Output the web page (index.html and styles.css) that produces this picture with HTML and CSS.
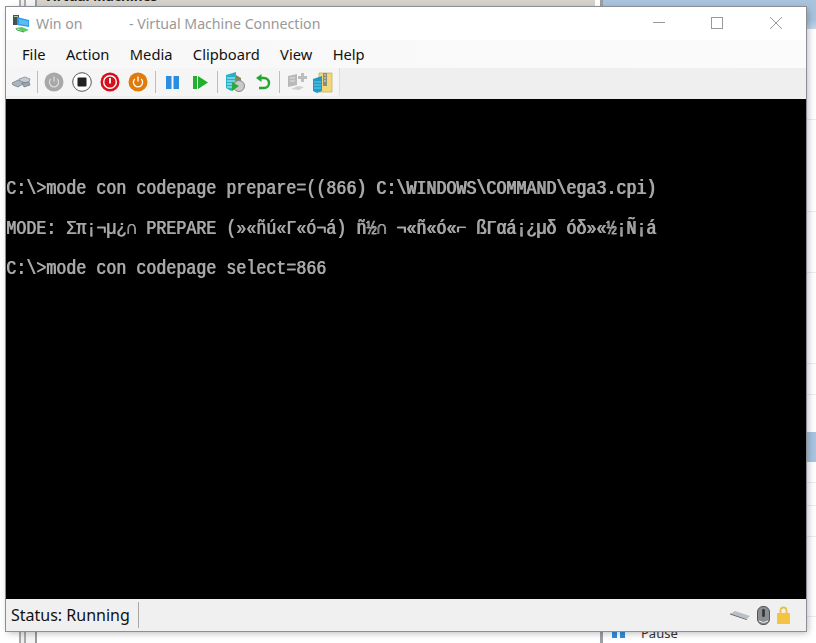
FILE: index.html
```html
<!DOCTYPE html>
<html lang="en">
<head>
<meta charset="utf-8">
<title>Win on - Virtual Machine Connection</title>
<link rel="stylesheet" href="styles.css">
</head>
<body>
<div class="desk">
  <div class="bg-left-top"><span class="bg-heading">Virtual Machines</span></div>
  <div class="bg-rail"></div>
  <div class="bg-divider"></div>
  <div class="bg-blue-top"></div>
  <div class="bg-rows">
    <i class="row r1"></i><i class="row r2"></i><i class="row r3"></i><i class="row r4"></i><i class="row r5"></i>
    <i class="row r6"></i><i class="row r7"></i><i class="row r8"></i><i class="row r9"></i>
  </div>
  <div class="bg-right-select"></div>
  <div class="bg-pause">
    <svg width="13" height="10" viewBox="0 0 13 10"><rect width="5" height="10" fill="#2f8fe0"/><rect x="8" width="5" height="10" fill="#2f8fe0"/></svg>
    <span>Pause</span>
  </div>

  <main class="window">
    <header class="titlebar">
      <svg class="app-icon" width="20" height="20" viewBox="0 0 20 20">
        <rect x="1" y="1" width="6" height="10" fill="#4a4f52"/>
        <rect x="2" y="2" width="4" height="1" fill="#9fd89b"/>
        <path d="M5 3l12 3v7L5 11z" fill="#2c9bea"/>
        <path d="M7 5l9 2v4.500L7 10z" fill="#58bdf5"/>
        <path d="M4 14l6-1 7 3-5 2z" fill="#62c866"/>
        <path d="M4 14l1 2 7 2" stroke="#36a03f" fill="none"/>
      </svg>
      <span class="title"><span class="vm-name">Win on</span><span>- Virtual Machine Connection</span></span>
      <div class="caption">
        <svg width="14" height="14" viewBox="0 0 14 14"><path d="M0 6.500h12" stroke="#999" fill="none"/></svg>
        <svg width="14" height="14" viewBox="0 0 14 14"><rect x=".5" y="1.500" width="11" height="11" stroke="#999" fill="none"/></svg>
        <svg width="14" height="14" viewBox="0 0 14 14"><path d="M1 1l12 12M13 1L1 13" stroke="#999" fill="none"/></svg>
      </div>
    </header>
    <nav class="menubar">
      <span>File</span><span>Action</span><span>Media</span><span>Clipboard</span><span>View</span><span>Help</span>
    </nav>
    <div class="toolbar">
      <div class="tools">
        <svg class="tool" width="20" height="14" viewBox="0 0 20 14">
          <path d="M1 8l6-3 4 1 1 3-5 3-5-2z" fill="#a9b4bd" stroke="#6f7a84" stroke-width=".7"/>
          <path d="M8 4l6-2 5 2-1 3-4 1-5-2z" fill="#c3ccd3" stroke="#77828c" stroke-width=".7"/>
          <path d="M11 8l7-1 1 3-6 2z" fill="#9aa5ae" stroke="#6f7a84" stroke-width=".7"/>
        </svg>
        <i class="sep ml6"></i>
        <svg class="tool ml6" width="20" height="20" viewBox="0 0 20 20">
          <circle cx="10" cy="10" r="9.500" fill="#a8a8a8"/>
          <path d="M6.800 7a4.600 4.600 0 1 0 6.400 0" stroke="#ddd" stroke-width="1.200" fill="none"/>
          <path d="M10 4.500v5" stroke="#ddd" stroke-width="1.200"/>
        </svg>
        <svg class="tool ml8" width="20" height="20" viewBox="0 0 20 20">
          <circle cx="10" cy="10" r="9.300" fill="#fff" stroke="#555" stroke-width="1"/>
          <rect x="5.500" y="5.500" width="9" height="9" rx="1" fill="#222"/>
        </svg>
        <svg class="tool ml8" width="20" height="20" viewBox="0 0 20 20">
          <circle cx="10" cy="10" r="9.500" fill="#d50f1c"/>
          <circle cx="10" cy="10" r="6.300" fill="none" stroke="#fff" stroke-width="1.400"/>
          <path d="M10 6v5.500" stroke="#fff" stroke-width="1.800"/>
        </svg>
        <svg class="tool ml8" width="20" height="20" viewBox="0 0 20 20">
          <circle cx="10" cy="10" r="9.500" fill="#e07b0c"/>
          <path d="M6.800 7a4.600 4.600 0 1 0 6.400 0" stroke="#fff" stroke-width="1.300" fill="none"/>
          <path d="M10 4.500v5" stroke="#fff" stroke-width="1.300"/>
        </svg>
        <i class="sep ml7"></i>
        <svg class="tool ml10" width="13" height="13" viewBox="0 0 13 13">
          <rect width="5.500" height="13" fill="#2b8de0"/><rect x="7.500" width="5.500" height="13" fill="#2b8de0"/>
        </svg>
        <svg class="tool ml14" width="15" height="13" viewBox="0 0 15 13">
          <rect width="4" height="13" fill="#23b02f"/><path d="M5 0l10 6.500L5 13z" fill="#23b02f"/>
        </svg>
        <i class="sep ml9"></i>
        <svg class="tool ml7" width="20" height="20" viewBox="0 0 20 20">
          <path d="M1 3l10-3v16l-5 3-5-3z" fill="#27b1cb"/>
          <path d="M2 6h8M2 9h8M2 12h8M2 15h5" stroke="#c8eef5"/>
          <path d="M11 3l5 3v4h-5z" fill="#7a8d55"/>
          <circle cx="14" cy="14" r="5.500" fill="#c9c9c9" stroke="#888"/>
          <path d="M7 10l7 4-7 5z" fill="#2aa838"/>
        </svg>
        <svg class="tool ml11" width="15" height="16" viewBox="0 0 15 16">
          <path d="M3 14h5a5 5 0 0 0 0-10H3" fill="none" stroke="#23a82f" stroke-width="2.400"/>
          <path d="M5.500 0v8L0 4z" fill="#23a82f"/>
        </svg>
        <i class="sep ml8"></i>
        <svg class="tool ml7" width="20" height="20" viewBox="0 0 20 20">
          <path d="M1 4l9-2v11l-9 2z" fill="#b9b9b9"/>
          <path d="M3 6h5M3 9h5" stroke="#e5e5e5"/>
          <path d="M14 1h3v3h3v3h-3v3h-3V7h-3V4h3z" fill="#bdbdbd"/>
          <path d="M4 17l7-3 6 1-5 3z" fill="#cfcfcf"/>
        </svg>
        <svg class="tool ml6" width="20" height="21" viewBox="0 0 20 21">
          <path d="M6 1h13v19H6z" fill="#f0d77a" stroke="#c3a94b" stroke-width=".7"/>
          <rect x="10" y="1" width="4" height="13" fill="#8d8d7a"/>
          <path d="M11 3h2M11 6h2M11 9h2" stroke="#ddd"/>
          <path d="M0 7l9-3v15l-5 2-4-2z" fill="#1c9cc8"/>
          <path d="M1 10h7M1 13h7M1 16h7" stroke="#74cbe6"/>
        </svg>
      </div>
    </div>
    <div class="screen"><pre class="console">




C:\&gt;mode con codepage prepare=((866) C:\WINDOWS\COMMAND\ega3.cpi)

MODE: Σπ¡¬µ¿∩ PREPARE (»«ñú«Γ«ó¬á) ñ½∩ ¬«ñ«ó«⌐ ßΓαá¡¿µδ óδ»«½¡Ñ¡á

C:\&gt;mode con codepage select=866</pre></div>
    <footer class="statusbar">
      <span class="status">Status: Running</span>
      <div class="indicators">
        <svg width="20" height="9" viewBox="0 0 20 9"><path d="M0 3l5-3 15 5-3 3z" fill="#b9bfc4"/><path d="M0 3l15 5 2 1" stroke="#66707a" fill="none"/></svg>
        <svg width="13" height="19" viewBox="0 0 13 19"><rect x=".5" y=".5" width="12" height="18" rx="5.500" fill="#8b8e90" stroke="#555"/><rect x="5.200" y="3" width="2.600" height="8" rx="1.300" fill="#2f3336"/><path d="M2 15q4.500 3 9 0" stroke="#eee" fill="none"/></svg>
        <svg width="13" height="18" viewBox="0 0 13 18"><path d="M3.500 8V4.500a3 3 0 0 1 6 0V8" fill="none" stroke="#e8c04c" stroke-width="1.800"/><rect y="7" width="13" height="11" rx="1" fill="#f3c443"/></svg>
      </div>
    </footer>
  </main>
</div>
</body>
</html>
```
FILE: styles.css
```css
* { box-sizing: border-box; }
html, body { margin: 0; padding: 0; }
body { background: #fff; font-family: "Noto Sans", "Open Sans", sans-serif; }

.desk { position: relative; width: 816px; height: 643px; overflow: hidden; background: #fff; }

.bg-left-top { position: absolute; left: 37px; top: 0; width: 558px; height: 7px; background: #d5d2cb; overflow: hidden; }
.bg-heading { position: absolute; left: 7px; top: -12px; font-size: 13.5px; font-weight: 700; color: #222; line-height: 16px; white-space: nowrap; }
.bg-rail { position: absolute; left: 19px; top: 0; width: 18px; height: 643px; border-left: 2px solid #a9a9a9; border-right: 2px solid #9a9a9a; background: linear-gradient(to right, #eee 0 3px, #a9a9a9 3px 5px, #f4f4f4 5px); }
.bg-divider { position: absolute; left: 600px; top: 0; width: 3px; height: 643px; background: #9a9fa6; }
.bg-blue-top { position: absolute; left: 603px; top: 0; width: 213px; height: 29px; background: linear-gradient(to bottom, #a9c3de 70%, #c4d6e9); }
.bg-rows { position: absolute; left: 806px; top: 0; width: 10px; height: 643px; }
.row { position: absolute; left: 0; width: 10px; height: 1px; background: #ececec; }
.r1 { top: 119px; } .r2 { top: 211px; } .r3 { top: 272px; } .r4 { top: 363px; } .r5 { top: 394px; }
.r6 { top: 482px; } .r7 { top: 505px; } .r8 { top: 536px; } .r9 { top: 616px; }
.bg-right-select { position: absolute; left: 806px; top: 432px; width: 10px; height: 30px; background: #a9c4e0; }
.bg-pause { position: absolute; left: 612px; top: 624px; display: flex; align-items: center; gap: 16px; font-size: 13px; color: #333; line-height: 18px; }

.window {
  position: absolute; left: 6px; top: 7px; width: 800px; height: 624px;
  display: flex; flex-direction: column; background: #f0f0f0;
  box-shadow: 0 0 0 1px #8a8f96, 2px 2px 7px rgba(0,0,0,.28);
}
.titlebar { height: 33px; background: #fff; display: flex; align-items: center; padding-left: 6px; flex: none; }
.app-icon { flex: none; margin-right: 4px; }
.title { font-size: 14.15px; color: #999; display: flex; white-space: nowrap; }
.vm-name { width: 93px; }
.caption { margin-left: auto; display: flex; gap: 44px; padding-right: 23px; padding-bottom: 1px; align-items: center; }

.menubar { height: 28px; background: linear-gradient(to right, #f7f7f7, #fbfbfb); display: flex; align-items: center; padding-left: 16px; gap: 20.4px; font-size: 14.7px; color: #111; flex: none; }

.toolbar { height: 31px; background: #efefef; display: flex; flex: none; }
.tools { width: 334px; height: 28px; background: #f5f5f5; border-right: 1px solid #ddd; border-bottom-right-radius: 3px; display: flex; align-items: center; padding-left: 5px; }
.tool { flex: none; display: block; }
.sep { width: 1px; height: 22px; background: #bdbdbd; flex: none; }
.ml6 { margin-left: 6px; } .ml7 { margin-left: 7px; } .ml8 { margin-left: 8px; } .ml9 { margin-left: 9px; }
.ml10 { margin-left: 10px; } .ml11 { margin-left: 11px; } .ml14 { margin-left: 14px; }

.screen { height: 500px; background: #000; flex: none; overflow: hidden; }
.console {
  margin: 0; width: 960px; transform: scaleX(.8333); transform-origin: 0 0;
  color: #a8a8a8; font-family: "Liberation Mono", monospace; font-size: 20px; line-height: 20px; white-space: pre;
  text-shadow: 1px 0 0 #a8a8a8; filter: blur(.35px);
}

.statusbar { flex: 1; background: #f0f0f0; display: flex; align-items: center; padding-left: 5px; padding-right: 16px; }
.status { font-size: 16px; color: #111; border-right: 1px solid #a8a8a8; padding-right: 8px; line-height: 26px; }
.indicators { margin-left: auto; display: flex; align-items: center; gap: 7px; }
```
